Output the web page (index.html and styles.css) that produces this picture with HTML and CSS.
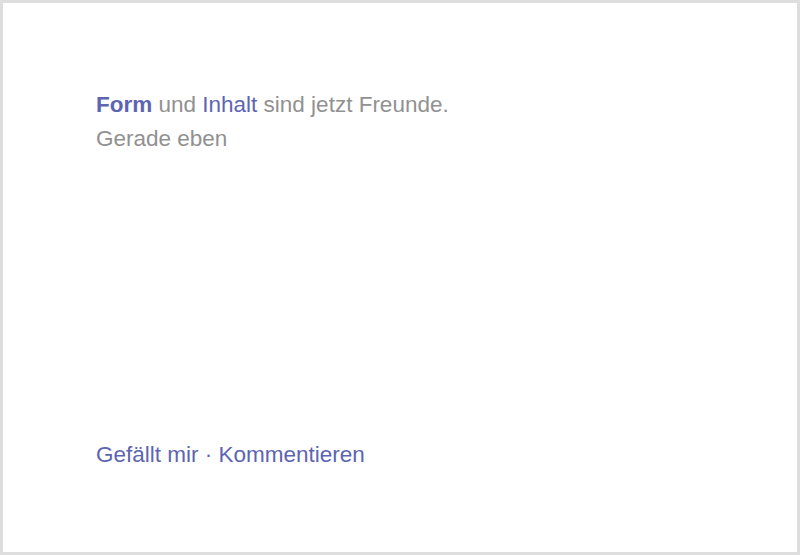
FILE: index.html
```html
<!DOCTYPE html>
<html lang="de">
<head>
<meta charset="utf-8">
<link rel="stylesheet" href="styles.css">
</head>
<body>
<div class="frame">
  <div class="post">
    <p class="line"><span class="strong">Form</span> und <span class="link">Inhalt</span> sind jetzt Freunde.</p>
    <p class="time">Gerade eben</p>
  </div>
  <div class="actions"><span class="link">Gefällt mir</span> · <span class="link">Kommentieren</span></div>
</div>
</body>
</html>
```
FILE: styles.css
```css
html, body { margin: 0; padding: 0; background: #fff; }
body { font-family: "Liberation Sans", Arial, sans-serif; }
.frame {
  box-sizing: border-box;
  width: 800px;
  height: 555px;
  border: 3px solid #dedede;
  margin: 0;
  padding: 85px 94px 0 93px;
  display: flex;
  flex-direction: column;
}
.post { flex: 1; }
.line, .time { margin: 0; font-size: 22.5px; line-height: 34px; color: #919191; }
.strong { font-weight: bold; color: #5d65b2; }
.link { color: #5d65b2; }
.actions { font-size: 22.5px; line-height: 34px; color: #5d65b2; margin-bottom: 80px; }
```
